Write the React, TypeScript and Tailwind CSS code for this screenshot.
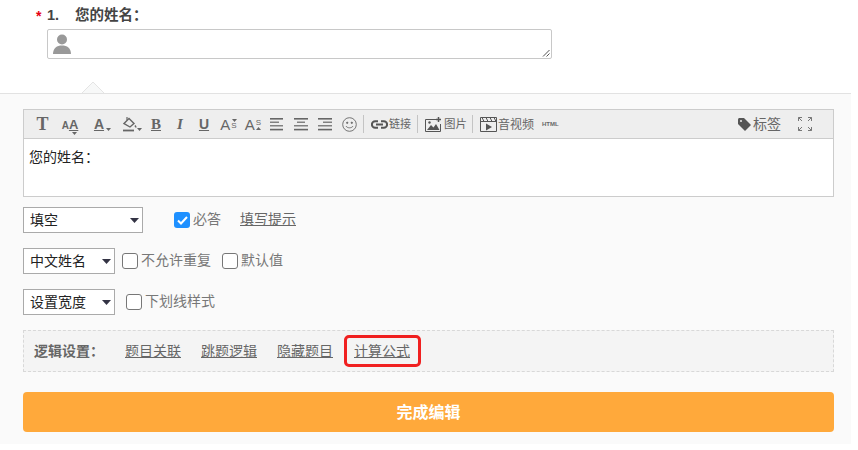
const CJK = "font-['Liberation_Sans','Noto_Sans_CJK_SC',sans-serif]";

const Caret = ({ className = "", up = false }: { className?: string; up?: boolean }) => (
  <svg width="5" height="3" viewBox="0 0 5 3" className={className}>
    <path d={up ? "M0 3h5L2.500 0z" : "M0 0h5L2.500 3z"} fill="#666" />
  </svg>
);

const AlignIcon = ({ rows }: { rows: [number, number][] }) => (
  <svg width="14" height="14" viewBox="0 0 14 14">
    {rows.map(([x, w], i) => (
      <rect key={i} x={x} y={1 + i * 3.6} width={w} height={i === 0 || i === 3 ? 1.6 : 1.2} fill="#666" />
    ))}
  </svg>
);

const Sep = () => <span className="block h-[18px] w-px bg-[#c4c4c4]" />;

const Toolbar = () => (
  <div className="flex h-[29px] items-center border-b border-[#ccc] bg-[#eeeeee] pl-[6px] pr-[21px] text-[#666]">
    <span className="flex w-[25px] justify-center font-['Liberation_Serif',serif] text-[18px] leading-none font-bold">T</span>
    <span className="relative flex w-[30px] items-baseline justify-center font-['Liberation_Sans',sans-serif] font-bold leading-none">
      <span className="text-[10px]">A</span>
      <span className="text-[13px] underline">A</span>
      <Caret className="absolute bottom-[-4px] left-[17px]" />
    </span>
    <span className="relative flex w-[28px] justify-center font-['Liberation_Sans',sans-serif] text-[14px] leading-none font-bold underline">
      A
      <Caret className="absolute bottom-0 left-[21px]" />
    </span>
    <span className="relative flex w-[31px] justify-center pl-[3px]">
      <svg width="16" height="16" viewBox="0 0 16 16" fill="none" stroke="#666">
        <path d="M2 7.500 7 2.500l5 5-4 3.500z" strokeWidth="1.400" />
        <path d="M5 1v3" strokeWidth="1.200" />
        <path d="M13 9.500c.7 1 .9 1.500.9 2" strokeWidth="1.400" />
        <path d="M1 14.500h11" strokeWidth="1.800" />
      </svg>
      <Caret className="absolute bottom-[1px] left-[24px]" />
    </span>
    <span className="flex w-[24px] justify-center font-['Liberation_Serif',serif] text-[15px] leading-none font-bold underline">B</span>
    <span className="flex w-[24px] justify-center font-['Liberation_Serif',serif] text-[15px] leading-none font-bold italic">I</span>
    <span className="flex w-[24px] justify-center font-['Liberation_Sans',sans-serif] text-[14px] leading-none font-bold underline">U</span>
    <span className="flex w-[25px] items-center justify-center font-['Liberation_Sans',sans-serif] leading-none">
      <span className="text-[15px]">A</span>
      <span className="ml-[1px] flex flex-col items-center">
        <Caret />
        <span className="text-[8px] leading-[8px]">S</span>
      </span>
    </span>
    <span className="flex w-[24px] items-center justify-center font-['Liberation_Sans',sans-serif] leading-none">
      <span className="text-[15px]">A</span>
      <span className="ml-[1px] flex flex-col items-center">
        <span className="text-[8px] leading-[8px]">S</span>
        <Caret up />
      </span>
    </span>
    <span className="flex w-[24px] justify-center">
      <AlignIcon rows={[[0, 13], [0, 9], [0, 13], [0, 13]]} />
    </span>
    <span className="flex w-[24px] justify-center">
      <AlignIcon rows={[[0, 14], [3, 8], [0, 14], [0, 14]]} />
    </span>
    <span className="flex w-[24px] justify-center">
      <AlignIcon rows={[[0, 14], [5, 9], [0, 14], [0, 14]]} />
    </span>
    <span className="flex w-[24px] justify-center">
      <svg width="15" height="15" viewBox="0 0 15 15" fill="none" stroke="#666" strokeWidth="0.9">
        <circle cx="7.500" cy="7.500" r="6.800" />
        <circle cx="5.200" cy="5.800" r="0.700" fill="#666" />
        <circle cx="9.800" cy="5.800" r="0.700" fill="#666" />
        <path d="M4 9c1 2.400 6 2.400 7 0" />
      </svg>
    </span>
    <span className="ml-[2px]"><Sep /></span>
    <svg width="17" height="9" viewBox="0 0 17 9" fill="none" stroke="#555" strokeWidth="2" className="ml-[7px]">
      <path d="M7 1.200H4.200a3.300 3.300 0 0 0 0 6.600H7M10 1.200h2.800a3.300 3.300 0 0 1 0 6.600H10M5 4.500h7" />
    </svg>
    <span className={`${CJK} ml-[1px] pt-[1px] text-[11px]`}>链接</span>
    <span className="ml-[6px]"><Sep /></span>
    <svg width="17" height="15" viewBox="0 0 17 15" className="ml-[7px]">
      <path d="M.5 2.500h11M.5 2.500v12h15V7" fill="none" stroke="#555" />
      <path d="M2 13l4-5 2.500 2.500L11 7l3.500 6z" fill="#555" />
      <circle cx="4.500" cy="5.500" r="1.200" fill="#555" />
      <path d="M13.500 0v5M11 2.500h5" stroke="#555" strokeWidth="1.500" />
    </svg>
    <span className={`${CJK} ml-[2px] pt-[1px] text-[11.500px]`}>图片</span>
    <span className="ml-[5px]"><Sep /></span>
    <svg width="17" height="15" viewBox="0 0 17 15" className="ml-[7px]">
      <path d="M.5.500h16v14H.5zM.5 4.500h16" fill="none" stroke="#555" />
      <path d="M2 .500l2 4M6 .500l2 4M10 .500l2 4M14 .500l2 4" stroke="#555" />
      <path d="M6 6.500l6 3.500-6 3.500z" fill="#555" />
    </svg>
    <span className={`${CJK} ml-[1px] pt-[1px] text-[12px]`}>音视频</span>
    <span className="ml-[8px] font-['Liberation_Sans',sans-serif] text-[6px] font-bold">HTML</span>
    <span className="ml-auto flex items-center">
      <svg width="13" height="13" viewBox="0 0 13 13">
        <path d="M0 1.500C0 .700.700 0 1.500 0H6l7 7-6 6-7-7z" fill="#555" />
        <circle cx="3" cy="3" r="1" fill="#eee" />
      </svg>
      <span className={`${CJK} ml-[2px] text-[14px]`}>标签</span>
      <svg width="14" height="14" viewBox="0 0 14 14" fill="none" stroke="#777" className="ml-[17px]">
        <path d="M.500 4V.500H4M.500.500l3.500 3.500M10 .500h3.500V4M13.500.500L10 4M.500 10v3.500H4M.500 13.500L4 10M10 13.500h3.500V10M13.500 13.500L10 10" />
      </svg>
    </span>
  </div>
);

const Select = ({ label, width }: { label: string; width: string }) => (
  <div className={`relative ${width} h-[26px]`}>
    <select className={`${CJK} h-full w-full appearance-none rounded-none border border-[#aaa] bg-white pl-[6px] text-[14px] text-[#222]`}>
      <option>{label}</option>
    </select>
    <svg width="9" height="5" viewBox="0 0 9 5" className="pointer-events-none absolute right-[4px] top-[11px]">
      <path d="M0 0h9L4.500 5z" fill="#334" />
    </svg>
  </div>
);

const Check = ({ label, className = "" }: { label: string; className?: string }) => (
  <label className={`flex items-center text-[14px] text-[#777] ${className}`}>
    <span className="h-[16px] w-[16px] rounded-[3px] border border-[#777] bg-white" />
    <span className="ml-[3px] pb-[2px]">{label}</span>
  </label>
);

export default function App() {
  return (
    <div className={`${CJK} h-[450px] w-[858px] bg-white`}>
      <div className="w-[851px]">
        <div className="flex h-[29px] items-center pt-[2px] text-[14.500px] leading-none font-bold text-[#444]">
          <span className="ml-[36px] w-[11px] text-[14px] text-[#e60012]">*</span>
          <span className="w-[28px]">1.</span>
          <span>您的姓名：</span>
        </div>
        <div className="ml-[47px] h-[30px] w-[505px]">
          <div className="relative h-full w-full rounded-[2px] border border-[#c8c8c8] bg-white">
            <svg width="18" height="20" viewBox="0 0 18 20" className="absolute left-[5px] top-[4px]">
              <circle cx="9" cy="5.500" r="5" fill="#999" />
              <path d="M0 20c0-6 4-8.500 9-8.500s9 2.500 9 8.500z" fill="#999" />
            </svg>
            <svg width="8" height="8" viewBox="0 0 8 8" className="absolute bottom-[1px] right-[1px]">
              <path d="M7.500 1L1 7.500M7.500 4.500L4.500 7.500" stroke="#555" />
            </svg>
          </div>
        </div>
        <div className="ml-[82px] mt-[23px] flex h-[11px]">
          <svg width="22" height="11" viewBox="0 0 22 11">
            <path d="M0 11 11 0l11 11z" fill="#f7f8f8" />
            <path d="M0 11 11 0l11 11" fill="none" stroke="#e4e4e4" />
          </svg>
        </div>
        <div className="h-[351px] border-t border-[#e2e2e2] bg-[#fafafa] pl-[23px] pr-[17px] pt-[15px]">
          <div className="border border-[#ccc] bg-white">
            <Toolbar />
            <div className="h-[57px] px-[5px] pt-[8px] text-[14px] leading-[20px] text-[#222]">您的姓名：</div>
          </div>
          <div className="mt-[10px] flex h-[26px] items-center">
            <Select label="填空" width="w-[120px]" />
            <span className="ml-[31px] flex h-[16px] w-[16px] items-center justify-center rounded-[3px] bg-[#1e90ff]">
              <svg width="11" height="9" viewBox="0 0 11 9" fill="none" stroke="#fff" strokeWidth="2">
                <path d="M1 4.500l3 3 6-6.500" />
              </svg>
            </span>
            <span className="ml-[3px] pb-[2px] text-[14px] text-[#777]">必答</span>
            <span className="ml-[19px] pb-[2px] text-[14px] text-[#666] underline">填写提示</span>
          </div>
          <div className="mt-[15px] flex h-[26px] items-center">
            <Select label="中文姓名" width="w-[92px]" />
            <Check label="不允许重复" className="ml-[7px]" />
            <Check label="默认值" className="ml-[11px]" />
          </div>
          <div className="mt-[15px] flex h-[26px] items-center">
            <Select label="设置宽度" width="w-[92px]" />
            <Check label="下划线样式" className="ml-[11px]" />
          </div>
          <div className="mt-[15px] flex h-[42px] items-center border border-dashed border-[#d8d8d8] bg-[#f4f4f4] text-[14px] text-[#666]">
            <span className="ml-[10px] w-[91px] font-bold">逻辑设置：</span>
            <span className="underline">题目关联</span>
            <span className="ml-[20px] underline">跳题逻辑</span>
            <span className="ml-[20px] underline">隐藏题目</span>
            <span className="ml-[11px] rounded-[5px] border-[3px] border-[#f02020] pl-[7px] pr-[8px] leading-[26px] underline">计算公式</span>
          </div>
          <button className="mt-[20px] h-[40px] w-full rounded-[4px] bg-[#ffa93b] pt-[2px] text-[16px] font-bold text-white">完成编辑</button>
        </div>
      </div>
    </div>
  );
}
